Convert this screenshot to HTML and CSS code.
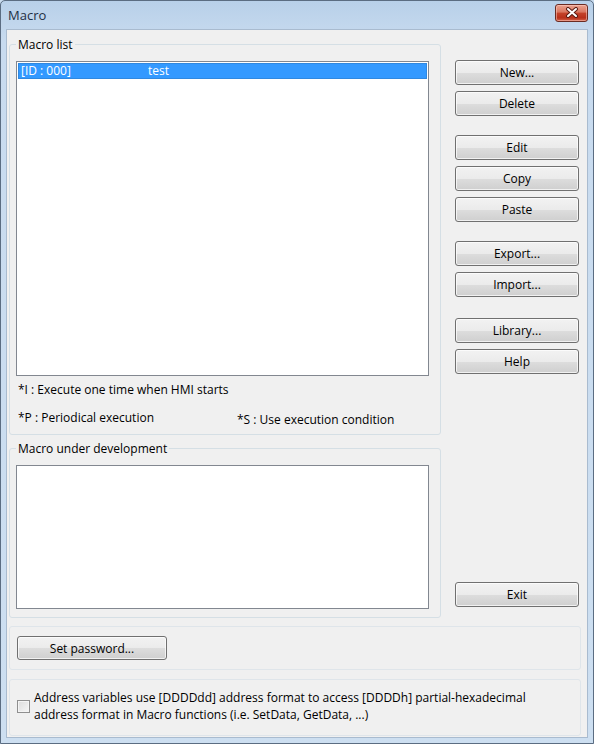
FILE: index.html
```html
<!DOCTYPE html>
<html lang="en">

<head>
    <meta charset="UTF-8">
    <meta name="viewport" content="width=device-width, initial-scale=1.0">
    <title>Macro</title>
    <link rel="stylesheet" href="styles.css">
</head>

<body>

    <div class="window">
        <div class="titlebar">
            <span class="title">Macro</span>
            <button class="close" aria-label="Close">
                <svg width="14" height="11" viewBox="0 0 14 11">
                    <path d="M3 2 L11 9 M11 2 L3 9" stroke="#5a1b12" stroke-width="4" stroke-linecap="round" />
                    <path d="M3 2 L11 9 M11 2 L3 9" stroke="#ffffff" stroke-width="2" stroke-linecap="round" />
                </svg>
            </button>
        </div>

        <div class="client">
            <div class="top-row">
                <div class="groups">
                    <fieldset class="group macro-list">
                        <legend>Macro list</legend>
                        <div class="listbox list-main">
                            <div class="list-item selected">
                                <span class="item-id">[ID : 000]</span>
                                <span>test</span>
                            </div>
                        </div>
                        <p class="note">*I : Execute one time when HMI starts</p>
                        <div class="note-row">
                            <span class="note-p">*P : Periodical execution</span>
                            <span class="note-s">*S : Use execution condition</span>
                        </div>
                    </fieldset>

                    <fieldset class="group macro-dev">
                        <legend>Macro under development</legend>
                        <div class="listbox list-dev"></div>
                    </fieldset>
                </div>

                <div class="buttons">
                    <button class="btn">New...</button>
                    <button class="btn">Delete</button>

                    <button class="btn gap-before">Edit</button>
                    <button class="btn">Copy</button>
                    <button class="btn">Paste</button>

                    <button class="btn gap-before">Export...</button>
                    <button class="btn">Import...</button>

                    <button class="btn gap-before gap-wide">Library...</button>
                    <button class="btn">Help</button>

                    <button class="btn exit">Exit</button>
                </div>
            </div>

            <div class="panel password-panel">
                <button class="btn btn-password">Set password...</button>
            </div>

            <div class="panel option-panel">
                <label class="check">
                    <span class="checkbox"></span>
                    <span class="check-text">Address variables use [DDDDdd] address format to access [DDDDh] partial-hexadecimal<br>address format in Macro functions (i.e. SetData, GetData, ...)</span>
                </label>
            </div>
        </div>
    </div>

</body>

</html>
```

FILE: styles.css
```css
body {
    margin: 0;
    padding: 0;
    font-family: "Open Sans", Arial, sans-serif;
    font-size: 12px;
    color: #000;
    background: #c9dcef;
}

.window {
    width: 594px;
    height: 744px;
    box-sizing: border-box;
    border: 1px solid #5b6d82;
    border-radius: 5px 5px 0 0;
    background: linear-gradient(#b8d0e9, #c8dbef 40px, #cddff1);
    padding: 0 5px 5px 5px;
    display: flex;
    flex-direction: column;
}

.titlebar {
    height: 28px;
    display: flex;
    align-items: center;
    justify-content: space-between;
    padding-left: 2px;
}

.title {
    font-size: 13px;
    color: #1e2f45;
}

.close {
    width: 33px;
    height: 18px;
    margin-top: -5px;
    margin-right: 0;
    padding: 0;
    border: 1px solid #6b2b22;
    border-radius: 3px;
    background: linear-gradient(#eba28f, #d9765f 45%, #c4432a 50%, #b8301a 80%, #d4634a);
    box-shadow: inset 0 0 0 1px rgba(255, 210, 200, 0.5);
    display: flex;
    align-items: center;
    justify-content: center;
}

.client {
    flex: 1;
    background: #f0f0f0;
    border: 1px solid #a9bbcf;
    padding: 7px 6px 1px 2px;
    display: flex;
    flex-direction: column;
}

.top-row {
    display: flex;
}

.groups {
    width: 432px;
}

.group {
    margin: 0;
    border: 1px solid #d5dfe5;
    border-radius: 3px;
    padding: 9px 11px 7px 6px;
}

.group legend {
    padding: 0 2px;
    font-size: 12px;
    line-height: 15px;
}

.listbox {
    background: #fff;
    border: 1px solid #828790;
    padding: 1px;
}

.list-main {
    height: 311px;
}

.list-dev {
    height: 140px;
}

.macro-dev {
    margin-top: 6px;
    padding-bottom: 8px;
}

.list-item {
    height: 14px;
    line-height: 14px;
    padding-left: 2px;
    display: flex;
}

.list-item.selected {
    background: #3399ff;
    border: 1px solid #2f88e0;
    color: #fff;
}

.item-id {
    width: 127px;
}

.note {
    margin: 6px 0 0 2px;
    line-height: 15px;
}

.note-row {
    display: flex;
    margin: 13px 0 0 2px;
    line-height: 15px;
}

.note-p {
    width: 219px;
}

.note-s {
    margin-top: 2px;
}

.buttons {
    margin-left: 14px;
    width: 124px;
    padding: 23px 0 11px;
    display: flex;
    flex-direction: column;
    gap: 6px;
}

.btn {
    height: 25px;
    padding: 0;
    font-family: "Open Sans", Arial, sans-serif;
    font-size: 12px;
    color: #000;
    border: 1px solid #707070;
    border-radius: 3px;
    background: linear-gradient(#f2f2f2, #ebebeb 50%, #dddddd 51%, #cfcfcf);
    box-shadow: inset 0 0 0 1px rgba(255, 255, 255, 0.7);
}

.gap-before {
    margin-top: 13px;
}

.gap-wide {
    margin-top: 15px;
}

.exit {
    margin-top: auto;
}

.panel {
    border: 1px solid #dfe5ea;
    border-radius: 3px;
}

.password-panel {
    margin-top: 8px;
    padding: 9px 7px 9px 7px;
}

.btn-password {
    width: 150px;
    height: 24px;
}

.option-panel {
    margin-top: 9px;
    flex: 1;
    padding: 9px 7px;
}

.check {
    display: flex;
    align-items: center;
    gap: 4px;
}

.checkbox {
    width: 11px;
    height: 11px;
    border: 1px solid #8f8f8f;
    background: linear-gradient(135deg, #dcdcdc, #f6f6f6);
    box-shadow: inset 0 0 0 1px #f4f4f4;
}

.check-text {
    font-size: 12px;
    line-height: 17px;
}
```
